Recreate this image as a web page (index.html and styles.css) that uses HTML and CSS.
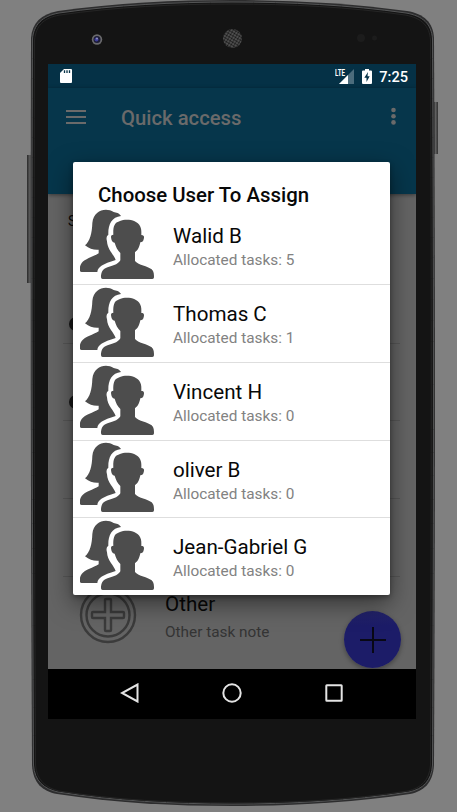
FILE: index.html
```html
<!DOCTYPE html>
<html lang="en">
<head>
<meta charset="utf-8">
<title>Quick access</title>
<link rel="stylesheet" href="styles.css">
</head>
<body>
<svg class="device" viewBox="0 0 457 812" aria-hidden="true">
  <defs>
    <linearGradient id="key" x1="0" x2="1"><stop offset="0" stop-color="#292929"/><stop offset=".5" stop-color="#606060"/><stop offset="1" stop-color="#303030"/></linearGradient>
    <pattern id="mesh" width="2.8" height="2.8" patternUnits="userSpaceOnUse" patternTransform="rotate(30)"><rect width="2.8" height="2.8" fill="#626262"/><circle cx="1.4" cy="1.4" r="1.15" fill="#171717"/></pattern>
    <symbol id="users" viewBox="0 0 225 225">
      <g transform="translate(-30 -25)" fill="#4d4d4d">
        <path d="M153 49C148 40 138 39 131 37C108 23 71 31 67 70C66 101 60 125 45 137C58 148 72 151 86 150V161C70 171 45 177 35 190C29 198 29 207 30 214Q31 217 35 217H82C84 201 98 193 137 181C132 165 112 150 111 125C108 116 110 108 115 105C114 75 125 52 153 49Z"/>
        <path d="M150 64C166 56 201 59 210 79C215 88 214 98 214 106C223 106 223 112 221 119C220 125 217 127 211 128C208 143 204 151 195 158V184C207 197 232 199 245 209C252 215 252 225 252 233Q252 238 247 238H98Q93 238 93 233C93 223 95 211 106 206C124 198 144 196 151 182V160C142 151 138 142 134 129C126 128 124 120 123 112C123 107 126 105 130 105C129 84 132 70 145 66Z"/>
      </g>
    </symbol>
  </defs>
  <rect x="27" y="155" width="6" height="128" fill="url(#key)"/>
  <rect x="433" y="102" width="5" height="52" fill="url(#key)"/>
  <path d="M31 38C32 23 41 14 58 11C115 3 175 0 232 0S350 3 407 11C424 14 433 22 434 38C435 250 435.500 450 434 765C433 783 424 791 410 794C350 803 290 806 232 806S115 803 57 794C42 791 33 783 32 765C30.500 450 30.500 250 31 38Z" fill="#2d2d2e"/>
  <path d="M32.500 39C33.500 25 42 16 59 13C115 5 175 2 232 2S350 5 406 13C423 16 431.500 24 432.500 39C433.500 250 434 450 432.500 765C431.500 781 423 789 409 792C350 801 290 804 232 804S115 801 58 792C44 789 34.500 781 33.500 765C32 450 31.500 250 32.500 39Z" fill="#141414" stroke="#545556" stroke-width="1"/>
  <path d="M34.500 40C36 26 43 18 60 15C115 7 175 4 232 4S350 7 405 15C422 18 429.500 26 430.500 40C431.500 250 431.500 450 430.500 765C429.500 780 421 788 408 791C350 800 290 803 232 803S115 800 59 791C46 788 36.500 780 35.500 765C34 450 34 250 34.500 40Z" fill="#141414" stroke="#252525" stroke-width="1"/>
  <circle cx="97" cy="39.500" r="5.200" fill="#6a6a6c"/><circle cx="97" cy="39.500" r="3.500" fill="#1c1c35"/><circle cx="96.500" cy="39.500" r="2" fill="#3c3c98"/><circle cx="97" cy="38.500" r=".9" fill="#9a9ac7"/>
  <circle cx="232.500" cy="38.500" r="9.500" fill="url(#mesh)"/>
  <circle cx="361" cy="38" r="4" fill="#1c1c1c"/><circle cx="374.500" cy="38" r="2.500" fill="#1c1c1c"/>
</svg>

<main class="screen">
  <div class="status">
    <svg class="sd" viewBox="0 0 12 14"><path d="M4 0H11Q12 0 12 1V13Q12 14 11 14H1Q0 14 0 13V4Z" fill="#fff"/><path d="M4.500 1.300V4M7 1.300V4M9.500 1.300V4" stroke="#053247" stroke-width="1.300"/></svg>
    <svg class="signal" viewBox="0 0 19 15"><path d="M19 0V15H4Z" fill="#4c6c7c"/><path d="M13 6V15H4Z" fill="#fff"/><path d="M0 0H10.500V8H0Z" fill="#053146"/><text x="0" y="7" textLength="10" lengthAdjust="spacingAndGlyphs">LTE</text></svg>
    <svg class="battery" viewBox="0 0 10 15"><path d="M3 0H7V1.500H9Q10 1.500 10 2.500V14Q10 15 9 15H1Q0 15 0 14V2.500Q0 1.500 1 1.500H3Z" fill="#fff"/><path d="M6 3L2.300 8.800H4.500V13L7.700 7.300H5.500Z" fill="#053247"/></svg>
    <span class="clock">7:25</span>
  </div>
  <header class="appbar">
    <svg class="menu" viewBox="0 0 20 14"><path d="M0 1H20M0 7H20M0 13H20" stroke="#6a6a6a" stroke-width="2"/></svg>
    <h1>Quick access</h1>
    <svg class="more" viewBox="0 0 5 18"><g fill="#6a6a6a"><circle cx="2.500" cy="3" r="2.300"/><circle cx="2.500" cy="9.200" r="2.300"/><circle cx="2.500" cy="15.400" r="2.300"/></g></svg>
  </header>
  <section class="content">
    <p class="label">S</p>
    <div class="task"><i class="dot"></i></div>
    <div class="task"><i class="dot"></i></div>
    <div class="task"></div>
    <div class="task"></div>
    <div class="other">
      <svg class="plus" viewBox="0 0 58 58"><g fill="none" stroke="#3b3b3b" stroke-width="2.400"><circle cx="29" cy="29" r="27"/><circle cx="29" cy="29" r="21.500"/><path d="M26 14Q26 13 27 13H31Q32 13 32 14V26H44Q45 26 45 27V31Q45 32 44 32H32V44Q32 45 31 45H27Q26 45 26 44V32H14Q13 32 13 31V27Q13 26 14 26H26Z"/></g></svg>
      <div><div class="name">Other</div><div class="note">Other task note</div></div>
    </div>
  </section>
  <nav class="nav">
    <svg viewBox="0 0 20 20"><path d="M17.500 1.500V18.500L2 10Z"/></svg>
    <svg viewBox="0 0 20 20"><circle cx="10" cy="10" r="8.700"/></svg>
    <svg viewBox="0 0 20 20"><rect x="2.300" y="2.300" width="15.400" height="15.400" rx=".5"/></svg>
  </nav>
  <div class="fab"><svg viewBox="0 0 26 26"><path d="M13 0V26M0 13H26" stroke="#080815" stroke-width="2"/></svg></div>
  <section class="dialog">
    <h2>Choose User To Assign</h2>
    <ul>
      <li><svg><use href="#users"/></svg><div><div class="name">Walid B</div><div class="note">Allocated tasks: 5</div></div></li>
      <li><svg><use href="#users"/></svg><div><div class="name">Thomas C</div><div class="note">Allocated tasks: 1</div></div></li>
      <li><svg><use href="#users"/></svg><div><div class="name">Vincent H</div><div class="note">Allocated tasks: 0</div></div></li>
      <li><svg><use href="#users"/></svg><div><div class="name">oliver B</div><div class="note">Allocated tasks: 0</div></div></li>
      <li><svg><use href="#users"/></svg><div><div class="name">Jean-Gabriel G</div><div class="note">Allocated tasks: 0</div></div></li>
    </ul>
  </section>
</main>
</body>
</html>
```
FILE: styles.css
```css
* { box-sizing: border-box; margin: 0; padding: 0; }
body { width: 457px; height: 812px; overflow: hidden; background: #808080; font-family: Roboto, sans-serif; padding: 64px 0 0 48px; }
svg { display: block; flex: none; }
.device { position: absolute; left: 0; top: 0; width: 457px; height: 812px; }
.screen { position: relative; width: 368px; height: 655px; display: flex; flex-direction: column; overflow: hidden; background: #646464; }
.status { height: 24px; flex: none; background: #053146; display: flex; align-items: center; padding: 0 8px 0 12px; color: #fff; }
.sd { width: 12px; height: 14px; margin-right: auto; }
.signal { width: 19px; height: 15px; }
.signal text { font: 700 8.500px Roboto, sans-serif; fill: #fff; }
.battery { width: 10px; height: 15px; margin: 0 7px 0 8px; }
.clock { font-size: 14.600px; font-weight: 500; line-height: 24px; padding-top: 1px; }
.appbar { height: 106px; flex: none; display: flex; align-items: flex-start; background: #06364b; padding: 19px 20px 0 18px; z-index: 1; box-shadow: 0 1px 4px rgba(0,0,0,.45); }
.menu { width: 20px; height: 14px; margin: 3px 35px 0 0; }
.appbar h1 { font-size: 20.300px; line-height: 22px; font-weight: 500; color: #6a6a6a; margin-right: auto; }
.more { width: 5px; height: 18px; }
.content { height: 475px; flex: none; padding: 0 16px 0 15px; overflow: hidden; }
.label { height: 72px; padding: 18px 0 0 5px; font-size: 14px; line-height: 18px; color: #080808; }
.task { height: 77.650px; border-bottom: 1px solid #575757; padding: 51px 0 0 6px; }
.dot { display: block; width: 14px; height: 14px; border-radius: 50%; background: #171717; }
.other { display: flex; padding: 10px 0 0 16px; gap: 28px; }
.plus { width: 58px; height: 58px; margin-top: -1px; }
.name { font-size: 20.600px; line-height: 24px; color: #080808; white-space: nowrap; }
.note { font-size: 15.350px; line-height: 18px; white-space: nowrap; color: #828282; margin-top: 3px; }
.other > div { padding-top: 5px; }
.other .note { color: #343434; margin-top: 7px; }
.nav { height: 50px; flex: none; background: #000; display: flex; justify-content: center; align-items: center; gap: 82px; padding-bottom: 2px; }
.nav svg { width: 20px; height: 20px; fill: none; stroke: #e4e4e4; stroke-width: 2; }
.fab { position: absolute; left: 296px; top: 547px; width: 57px; height: 57px; border-radius: 50%; background: linear-gradient(#23236a, #1c1c68 25%, #1c1c68); box-shadow: 0 2px 5px rgba(0,0,0,.35); display: grid; place-items: center; }
.fab svg { width: 26px; height: 26px; }
.dialog { position: absolute; z-index: 2; left: 25px; top: 98px; width: 317px; height: 433px; background: #fff; border-radius: 2px; box-shadow: 0 8px 24px rgba(0,0,0,.5), 0 2px 5px rgba(0,0,0,.3); overflow: hidden; }
.dialog h2 { height: 45.500px; padding: 21px 0 0 25px; font-size: 20.400px; line-height: 24px; font-weight: 500; color: #080808; }
ul { list-style: none; }
li { height: 77.700px; display: flex; padding: .8px 0 0 7px; gap: 18px; border-bottom: 1px solid #dedede; }
li:last-child { border: 0; }
li svg { width: 75px; height: 75px; }
li > div { padding-top: 16.200px; }
```
